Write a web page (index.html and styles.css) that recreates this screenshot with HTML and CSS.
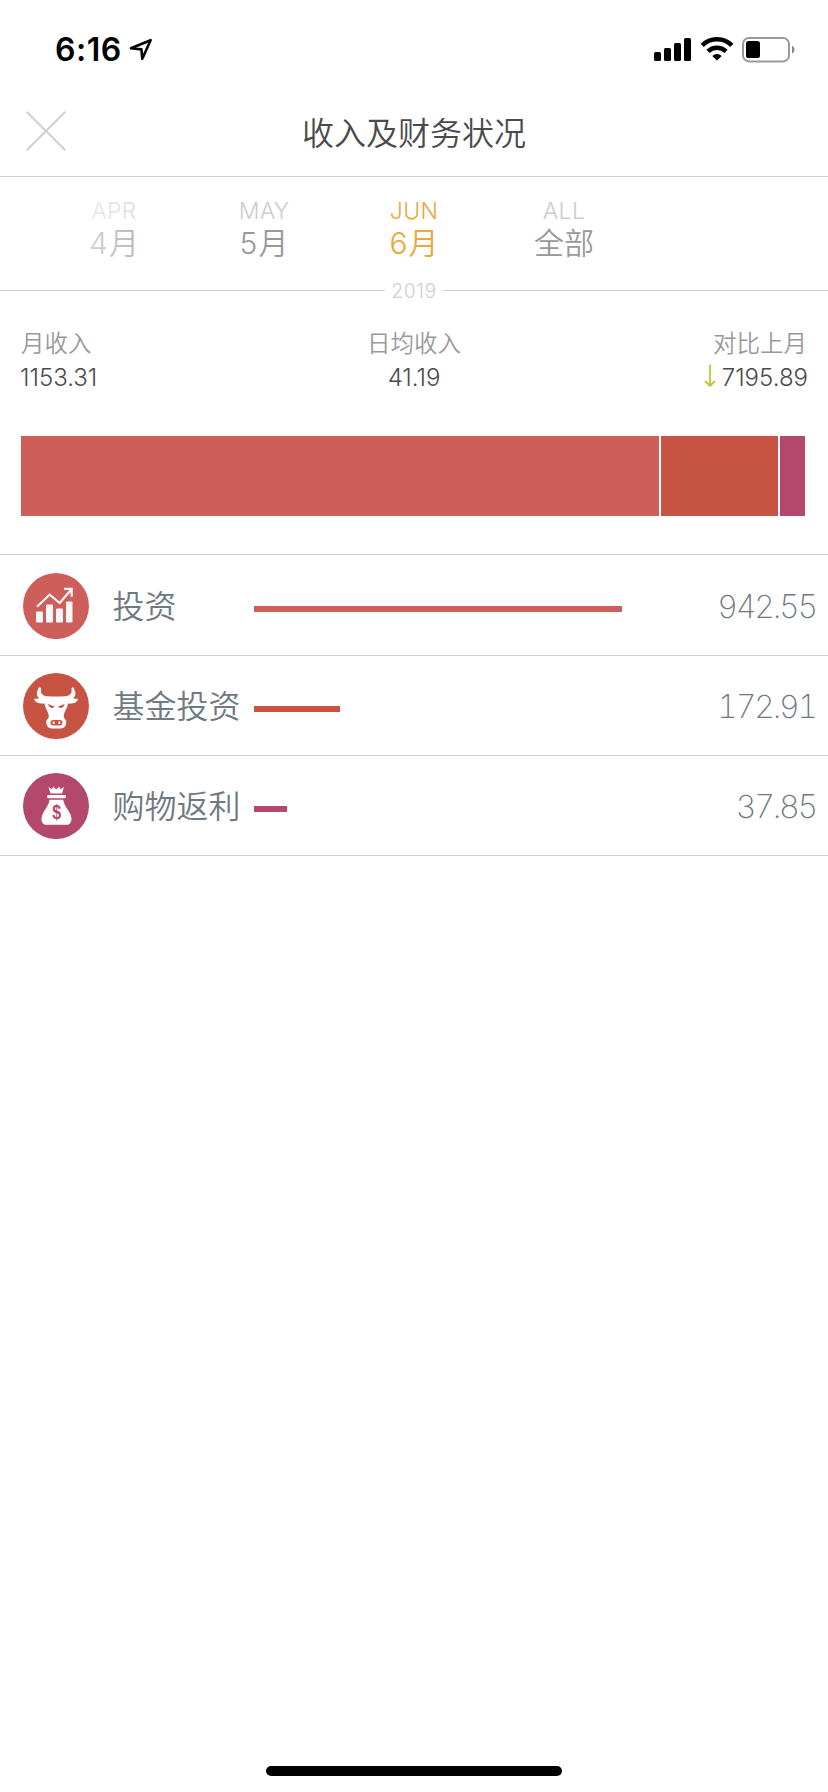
FILE: index.html
```html
<!DOCTYPE html>
<html lang="zh-CN">
<head>
<meta charset="UTF-8">
<meta name="viewport" content="width=device-width, initial-scale=1.0">
<title>收入及财务状况</title>
<link rel="stylesheet" href="styles.css">
</head>
<body>

<div class="status-bar">
  <span class="time">6:16</span>
  <svg class="location" width="24" height="24" viewBox="0 0 24 24">
    <path d="M2 10.3 L21.6 2.2 L13.3 20.8 L12.4 11.4 Z" fill="none" stroke="#000" stroke-width="2.6" stroke-linejoin="round"/>
  </svg>
  <div class="status-icons">
    <svg width="38" height="24" viewBox="0 0 38 24">
      <rect x="0" y="15" width="7" height="9" rx="1.6"/>
      <rect x="10" y="11" width="7" height="13" rx="1.6"/>
      <rect x="20" y="6" width="7" height="18" rx="1.6"/>
      <rect x="30" y="1" width="7" height="23" rx="1.6"/>
    </svg>
    <svg class="wifi" width="34" height="24" viewBox="0 0 34 24">
      <path d="M2.2 8.4 A21 21 0 0 1 31.8 8.4" fill="none" stroke="#000" stroke-width="4.6"/>
      <path d="M8 14.4 A12.8 12.8 0 0 1 26 14.4" fill="none" stroke="#000" stroke-width="4.4"/>
      <path d="M17 23.6 L12.3 19 A6.8 6.8 0 0 1 21.7 19 Z"/>
    </svg>
    <svg class="battery" width="54" height="26" viewBox="0 0 54 26">
      <rect x="1" y="1" width="46" height="23.4" rx="6" fill="none" stroke="#999" stroke-width="2"/>
      <rect x="4" y="4" width="14" height="17" rx="2.6"/>
      <path d="M50 8.6 A4.6 4.6 0 0 1 50 16.8 Z" fill="#888"/>
    </svg>
  </div>
</div>

<header>
  <svg class="close" width="40" height="40" viewBox="0 0 40 40">
    <path d="M0.7 0.7 L39.3 39.3 M39.3 0.7 L0.7 39.3" stroke="#d0d0d0" stroke-width="2"/>
  </svg>
  <h1>收入及财务状况</h1>
</header>

<nav class="months">
  <a class="month"><span class="en">APR</span><span class="cn"><b>4</b>月</span></a>
  <a class="month"><span class="en">MAY</span><span class="cn"><b>5</b>月</span></a>
  <a class="month active"><span class="en">JUN</span><span class="cn"><b>6</b>月</span></a>
  <a class="month"><span class="en">ALL</span><span class="cn">全部</span></a>
</nav>
<div class="year"><span>2019</span></div>

<section class="summary">
  <div class="stat">
    <span class="label">月收入</span>
    <span class="value">1153.31</span>
  </div>
  <div class="stat center">
    <span class="label">日均收入</span>
    <span class="value">41.19</span>
  </div>
  <div class="stat right">
    <span class="label">对比上月</span>
    <span class="value">
      <svg class="down" width="12" height="24" viewBox="0 0 12 24">
        <path d="M6 0.5 V22 M1 17 L6 22 L11 17" fill="none" stroke="#c3c33a" stroke-width="1.8"/>
      </svg>7195.89</span>
  </div>
</section>

<div class="stack">
  <div class="red" style="width: 638px"></div>
  <div class="orange" style="width: 117px"></div>
  <div class="purple" style="width: 25px"></div>
</div>

<ul class="list">
  <li>
    <svg class="icon" width="66" height="66" viewBox="0 0 66 66">
      <circle cx="33" cy="33" r="33" fill="#ce5e5a"/>
      <g fill="#f7f7f7">
        <rect x="13" y="38.5" width="7" height="11" rx="1"/>
        <rect x="23" y="31.5" width="7" height="18" rx="1"/>
        <rect x="33" y="35.5" width="7" height="14" rx="1"/>
        <rect x="43" y="28.5" width="6.5" height="21" rx="1"/>
      </g>
      <path d="M14 33.7 L26.6 21.7 L36.7 30 L48.3 16.5 M41 15.9 H48.7 V23.8" fill="none" stroke="#f7f7f7" stroke-width="2.2"/>
    </svg>
    <span class="name">投资</span>
    <div class="track"><div class="bar red" style="width: 368px"></div></div>
    <span class="amount">942.55</span>
  </li>
  <li>
    <svg class="icon" width="66" height="66" viewBox="0 0 66 66">
      <circle cx="33" cy="33" r="33" fill="#c75443"/>
      <path fill="#fff" d="M16.5 14 C13 19 13 23 16.3 25 C15 25.8 12.5 25.6 11 26 C11.8 29.5 16 31 21.5 30.6 C22.5 37 26 39 25.8 44.5 L23.4 47.5 C22.6 52 25 55.5 29 55.5 H37.5 C41.5 55.5 43.9 52 43.1 47.5 L40.8 44.5 C40.6 39 44 37 45 30.6 C50.5 31 54.3 29.5 55.1 26 C53.6 25.6 51.3 25.8 50 25 C53.3 23 53.3 19 50 14 C48.4 14.4 48.3 15.8 48.6 17 C49 21 46 23 42.6 23.3 C39 23.6 27.5 23.6 24 23.3 C20.5 23 17.5 21 18 17 C18.3 15.8 18.2 14.4 16.5 14 Z"/>
      <path fill="#c75443" d="M25 31 L31.5 33.6 C30.5 36 26 35.5 25 31 Z M41.7 31 L35.2 33.6 C36.2 36 40.7 35.5 41.7 31 Z"/>
      <rect x="27.5" y="47" width="12" height="5.4" rx="2.7" fill="#c75443"/>
      <path d="M30.6 48.5 v2.4 M36.4 48.5 v2.4" stroke="#fff" stroke-width="1.8"/>
    </svg>
    <span class="name">基金投资</span>
    <div class="track"><div class="bar orange" style="width: 86px"></div></div>
    <span class="amount">172.91</span>
  </li>
  <li>
    <svg class="icon" width="66" height="66" viewBox="0 0 66 66">
      <circle cx="33" cy="33" r="33" fill="#b4476c"/>
      <path fill="#fff" d="M25.5 14 L29 16.2 L30.3 13.5 L33.2 16.5 L36 13.5 L37.4 16.2 L41 14 L39 20.5 H27.5 Z"/>
      <rect x="24" y="22" width="19" height="3.2" rx="1.4" fill="#fff"/>
      <path fill="#fff" d="M26.5 26.7 H40.3 C41 34 48.5 39 48.5 46 C48.5 49.5 46.5 51.8 43.5 51.8 H23.5 C20.3 51.8 18.5 49.5 18.5 46 C18.5 39 25.8 34 26.5 26.7 Z"/>
      <text class="dollar" x="42" y="46" text-anchor="middle" transform="scale(0.8 1)">$</text>
    </svg>
    <span class="name">购物返利</span>
    <div class="track"><div class="bar purple" style="width: 33px"></div></div>
    <span class="amount">37.85</span>
  </li>
</ul>

<div class="home-indicator"></div>

</body>
</html>
```
FILE: styles.css
```css
* {
  box-sizing: border-box;
}
body {
  font-family: Inter, 'Noto Sans CJK SC', sans-serif;
  font-weight: 300;
  margin: 0;
  background: #fff;
  color: #4a4a4a;
  width: 828px;
  height: 1792px;
  display: flex;
  flex-direction: column;
}
.status-bar {
  height: 88px;
  padding: 0 32px 0 55px;
  display: flex;
  align-items: flex-start;
}
.time {
  color: #000;
  font-size: 32px;
  font-weight: 600;
  line-height: 40px;
  letter-spacing: 0.5px;
  margin-top: 30px;
}
.location {
  margin: 38px 0 0 7px;
}
.status-icons {
  display: flex;
  margin: 37px 0 0 auto;
}
.wifi {
  margin-left: 8px;
}
.battery {
  margin-left: 8px;
}
header {
  height: 89px;
  padding-left: 26px;
  border-bottom: 1px solid #d0d0d0;
  display: grid;
  grid-template-columns: 40px 1fr 66px;
}
.close {
  margin-top: 23px;
}
h1 {
  margin: 0;
  font-size: 32px;
  font-weight: 350;
  line-height: 92px;
  height: 88px;
  text-align: center;
}
.months {
  position: relative;
  height: 102px;
  padding: 20px 0 0 39px;
  display: flex;
}
/* left edge fades out under the scroller */
.months::before {
  content: '';
  position: absolute;
  left: 0;
  top: 0;
  width: 200px;
  height: 100px;
  background: linear-gradient(to right, #fff, rgba(255,255,255,0));
}
.month {
  width: 150px;
  display: flex;
  flex-direction: column;
  align-items: center;
  color: #999;
}
.en {
  font-size: 23px;
  line-height: 28px;
  letter-spacing: 0.3px;
  color: #ccc;
}
.cn {
  font-size: 30px;
  font-weight: 350;
  line-height: 36px;
}
.cn b {
  font-weight: 350;
  margin-right: 1px;
}
.active, .active .en {
  color: #eba93c;
}
.year {
  height: 22px;
  display: flex;
  align-items: center;
  gap: 6px;
  font-size: 19.5px;
  line-height: 22px;
  letter-spacing: 0.5px;
  color: #d3cccf;
}
.year span {
  padding-top: 1px;
}
.year::before, .year::after {
  content: '';
  flex: 1;
  height: 1px;
  background: #d0d0d0;
}
.summary {
  display: grid;
  grid-template-columns: 1fr 1fr 1fr;
  padding: 26px 20px 0;
  height: 135px;
}
.stat {
  display: flex;
  flex-direction: column;
}
.label {
  font-size: 23.5px;
  font-weight: 350;
  line-height: 34px;
  padding: 0 1px;
  color: #999;
}
.value {
  display: flex;
  font-size: 24px;
  line-height: 34px;
}
.center {
  align-items: center;
}
.right {
  align-items: flex-end;
}
.down {
  margin: 3px 6px 0 0;
}
.stack {
  display: flex;
  gap: 2px;
  height: 80px;
  margin: 0 21px 38px;
}
.red {
  background: #ce5e5a;
}
.orange {
  background: #c75443;
}
.purple {
  background: #b4476c;
}
.list {
  list-style: none;
  margin: 0;
  padding: 0;
  border-top: 1px solid #d0d0d0;
}
.list li {
  height: 100px;
  padding: 0 10px 0 22.5px;
  border-bottom: 1px solid #d0d0d0;
  display: grid;
  grid-template-columns: 90px 141.5px 1fr auto;
  align-items: center;
  color: #6f7981;
}
.list li:first-child {
  height: 101px;
  padding-top: 1px;
}
.name {
  font-size: 32px;
  font-weight: 350;
  line-height: 40px;
  padding-top: 2px;
}
.bar {
  height: 6px;
  margin-top: 7px;
}
.amount {
  font-size: 32px;
  font-weight: 150;
  font-variant-numeric: tabular-nums;
  letter-spacing: -2.2px;
  padding: 2px 2px 0 0;
}
.dollar {
  font: bold 20px 'Liberation Sans', sans-serif;
  fill: #b4476c;
}
.home-indicator {
  width: 296px;
  height: 10px;
  border-radius: 5px;
  background: #000;
  margin: auto auto 16px;
}
```
